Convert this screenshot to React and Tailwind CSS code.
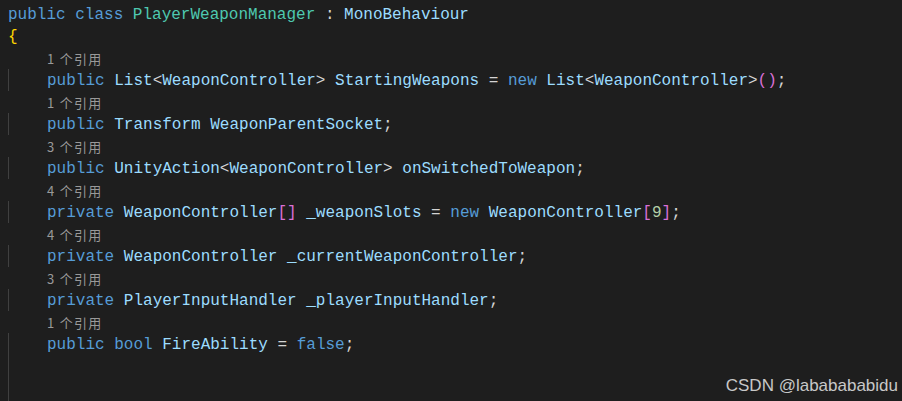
import React from "react";

const K = ({ children }) => <span className="text-[#569cd6]">{children}</span>;
const T = ({ children }) => <span className="text-[#9cdcfe]">{children}</span>;
const C = ({ children }) => <span className="text-[#4ec9b0]">{children}</span>;
const P = ({ children }) => <span className="text-[#d4d4d4]">{children}</span>;
const B = ({ children }) => <span className="text-[#da70d6]">{children}</span>;
const N = ({ children }) => <span className="text-[#b5cea8]">{children}</span>;

const Lens = ({ n }) => (
  <div className="h-[22px] ml-[8px] pl-[39px] leading-[22px] pt-[1px]">
    <span
      className="text-[13px] text-[#999999] tracking-[1.3px]"
      style={{ fontFamily: '"Noto Sans CJK SC", "Noto Sans", sans-serif' }}
    >
      {n} 个引用
    </span>
  </div>
);

const Code = ({ children }) => (
  <div className="h-[22px] ml-[8px] pl-[38px] border-l border-[#404040] leading-[22px] whitespace-pre">
    <span className="relative top-[1px]">{children}</span>
  </div>
);

export default function App() {
  return (
    <div
      className="relative w-[902px] h-[401px] bg-[#1e1e1e] overflow-hidden pt-[3px] text-[16px] leading-[22px]"
      style={{ fontFamily: '"Liberation Mono", monospace' }}
    >
      <div className="h-[22px] pl-[8px] whitespace-pre">
        <span className="relative top-[1px]">
          <K>public</K> <K>class</K> <C>PlayerWeaponManager</C> <P>:</P> <T>MonoBehaviour</T>
        </span>
      </div>
      <div className="h-[22px] pl-[8px] text-[#ffd700]">
        <span className="relative top-[1px]">{"{"}</span>
      </div>
      <Lens n="1" />
      <Code>
        <K>public</K> <T>List</T><P>&lt;</P><T>WeaponController</T><P>&gt;</P> <T>StartingWeapons</T> <P>=</P> <K>new</K> <T>List</T><P>&lt;</P><T>WeaponController</T><P>&gt;</P><B>()</B><P>;</P>
      </Code>
      <Lens n="1" />
      <Code>
        <K>public</K> <T>Transform</T> <T>WeaponParentSocket</T><P>;</P>
      </Code>
      <Lens n="3" />
      <Code>
        <K>public</K> <T>UnityAction</T><P>&lt;</P><T>WeaponController</T><P>&gt;</P> <T>onSwitchedToWeapon</T><P>;</P>
      </Code>
      <Lens n="4" />
      <Code>
        <K>private</K> <T>WeaponController</T><B>[]</B> <T>_weaponSlots</T> <P>=</P> <K>new</K> <T>WeaponController</T><B>[</B><N>9</N><B>]</B><P>;</P>
      </Code>
      <Lens n="4" />
      <Code>
        <K>private</K> <T>WeaponController</T> <T>_currentWeaponController</T><P>;</P>
      </Code>
      <Lens n="3" />
      <Code>
        <K>private</K> <T>PlayerInputHandler</T> <T>_playerInputHandler</T><P>;</P>
      </Code>
      <Lens n="1" />
      <Code>
        <K>public</K> <K>bool</K> <T>FireAbility</T> <P>=</P> <K>false</K><P>;</P>
      </Code>
      <Code> </Code>
      <Code> </Code>
      <Code> </Code>
      <div
        className="absolute right-[4px] bottom-[5px] text-[17px] leading-[20px] text-[#c8c8c8]"
        style={{ fontFamily: '"Liberation Sans", Arial, sans-serif' }}
      >
        CSDN @lababababidu
      </div>
    </div>
  );
}
